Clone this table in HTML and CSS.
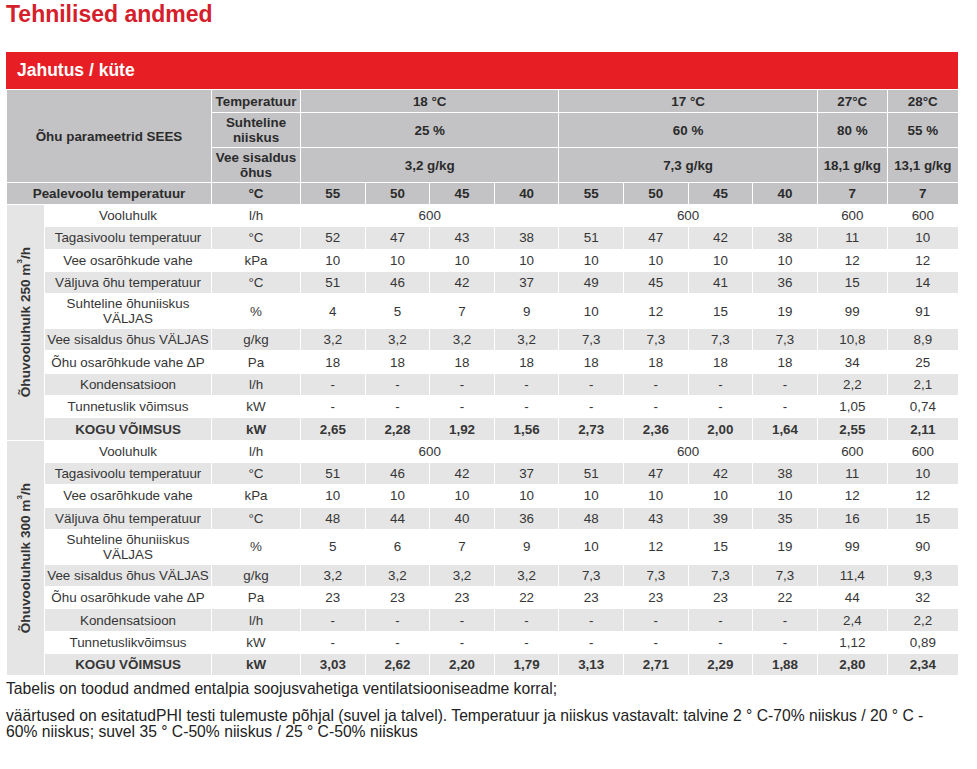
FILE: index.html
```html
<!DOCTYPE html>
<html lang="et">
<head>
<meta charset="utf-8">
<title>Tehnilised andmed</title>
<link rel="stylesheet" href="styles.css">
</head>
<body>
<div class="page">
  <h1 class="title">Tehnilised andmed</h1>
  <div class="bar">Jahutus / küte</div>
  <table class="data">
    <colgroup>
      <col class="c-grp"><col class="c-lbl"><col class="c-unit">
      <col class="c-v"><col class="c-v"><col class="c-v"><col class="c-v">
      <col class="c-v"><col class="c-v"><col class="c-v"><col class="c-v">
      <col class="c-a"><col class="c-b">
    </colgroup>
    <thead>
      <tr class="h-t">
        <th colspan="2" rowspan="3">Õhu parameetrid SEES</th>
        <th>Temperatuur</th>
        <th colspan="4">18 °C</th>
        <th colspan="4">17 °C</th>
        <th>27°C</th>
        <th>28°C</th>
      </tr>
      <tr class="h-2">
        <th>Suhteline niiskus</th>
        <th colspan="4">25 %</th>
        <th colspan="4">60 %</th>
        <th>80 %</th>
        <th>55 %</th>
      </tr>
      <tr class="h-2">
        <th>Vee sisaldus õhus</th>
        <th colspan="4">3,2 g/kg</th>
        <th colspan="4">7,3 g/kg</th>
        <th>18,1 g/kg</th>
        <th>13,1 g/kg</th>
      </tr>
      <tr class="h-p">
        <th colspan="2">Pealevoolu temperatuur</th>
        <th>°C</th>
        <th>55</th><th>50</th><th>45</th><th>40</th>
        <th>55</th><th>50</th><th>45</th><th>40</th>
        <th>7</th><th>7</th>
      </tr>
    </thead>
    <tbody>
      <tr class="r1 w">
        <td class="grp" rowspan="10"><div class="vt">Õhuvooluhulk 250 m<sup>3</sup>/h</div></td>
        <td>Vooluhulk</td><td>l/h</td>
        <td colspan="4">600</td><td colspan="4">600</td><td>600</td><td>600</td>
      </tr>
      <tr class="r1 g">
        <td>Tagasivoolu temperatuur</td><td>°C</td>
        <td>52</td><td>47</td><td>43</td><td>38</td><td>51</td><td>47</td><td>42</td><td>38</td><td>11</td><td>10</td>
      </tr>
      <tr class="r1 w">
        <td>Vee osarõhkude vahe</td><td>kPa</td>
        <td>10</td><td>10</td><td>10</td><td>10</td><td>10</td><td>10</td><td>10</td><td>10</td><td>12</td><td>12</td>
      </tr>
      <tr class="r1 g">
        <td>Väljuva õhu temperatuur</td><td>°C</td>
        <td>51</td><td>46</td><td>42</td><td>37</td><td>49</td><td>45</td><td>41</td><td>36</td><td>15</td><td>14</td>
      </tr>
      <tr class="r2 w">
        <td>Suhteline õhuniiskus VÄLJAS</td><td>%</td>
        <td>4</td><td>5</td><td>7</td><td>9</td><td>10</td><td>12</td><td>15</td><td>19</td><td>99</td><td>91</td>
      </tr>
      <tr class="r1 g">
        <td class="nw">Vee sisaldus õhus VÄLJAS</td><td>g/kg</td>
        <td>3,2</td><td>3,2</td><td>3,2</td><td>3,2</td><td>7,3</td><td>7,3</td><td>7,3</td><td>7,3</td><td>10,8</td><td>8,9</td>
      </tr>
      <tr class="r1 w">
        <td>Õhu osarõhkude vahe ΔP</td><td>Pa</td>
        <td>18</td><td>18</td><td>18</td><td>18</td><td>18</td><td>18</td><td>18</td><td>18</td><td>34</td><td>25</td>
      </tr>
      <tr class="r1 g">
        <td>Kondensatsioon</td><td>l/h</td>
        <td>-</td><td>-</td><td>-</td><td>-</td><td>-</td><td>-</td><td>-</td><td>-</td><td>2,2</td><td>2,1</td>
      </tr>
      <tr class="r1 w">
        <td>Tunnetuslik võimsus</td><td>kW</td>
        <td>-</td><td>-</td><td>-</td><td>-</td><td>-</td><td>-</td><td>-</td><td>-</td><td>1,05</td><td>0,74</td>
      </tr>
      <tr class="r1 g total">
        <td>KOGU VÕIMSUS</td><td>kW</td>
        <td>2,65</td><td>2,28</td><td>1,92</td><td>1,56</td><td>2,73</td><td>2,36</td><td>2,00</td><td>1,64</td><td>2,55</td><td>2,11</td>
      </tr>

      <tr class="r1 w">
        <td class="grp" rowspan="10"><div class="vt">Õhuvooluhulk 300 m<sup>3</sup>/h</div></td>
        <td>Vooluhulk</td><td>l/h</td>
        <td colspan="4">600</td><td colspan="4">600</td><td>600</td><td>600</td>
      </tr>
      <tr class="r1 g">
        <td>Tagasivoolu temperatuur</td><td>°C</td>
        <td>51</td><td>46</td><td>42</td><td>37</td><td>51</td><td>47</td><td>42</td><td>38</td><td>11</td><td>10</td>
      </tr>
      <tr class="r1 w">
        <td>Vee osarõhkude vahe</td><td>kPa</td>
        <td>10</td><td>10</td><td>10</td><td>10</td><td>10</td><td>10</td><td>10</td><td>10</td><td>12</td><td>12</td>
      </tr>
      <tr class="r1 g">
        <td>Väljuva õhu temperatuur</td><td>°C</td>
        <td>48</td><td>44</td><td>40</td><td>36</td><td>48</td><td>43</td><td>39</td><td>35</td><td>16</td><td>15</td>
      </tr>
      <tr class="r2 w">
        <td>Suhteline õhuniiskus VÄLJAS</td><td>%</td>
        <td>5</td><td>6</td><td>7</td><td>9</td><td>10</td><td>12</td><td>15</td><td>19</td><td>99</td><td>90</td>
      </tr>
      <tr class="r1 g">
        <td class="nw">Vee sisaldus õhus VÄLJAS</td><td>g/kg</td>
        <td>3,2</td><td>3,2</td><td>3,2</td><td>3,2</td><td>7,3</td><td>7,3</td><td>7,3</td><td>7,3</td><td>11,4</td><td>9,3</td>
      </tr>
      <tr class="r1 w">
        <td>Õhu osarõhkude vahe ΔP</td><td>Pa</td>
        <td>23</td><td>23</td><td>23</td><td>22</td><td>23</td><td>23</td><td>23</td><td>22</td><td>44</td><td>32</td>
      </tr>
      <tr class="r1 g">
        <td>Kondensatsioon</td><td>l/h</td>
        <td>-</td><td>-</td><td>-</td><td>-</td><td>-</td><td>-</td><td>-</td><td>-</td><td>2,4</td><td>2,2</td>
      </tr>
      <tr class="r1 w">
        <td>Tunnetuslikvõimsus</td><td>kW</td>
        <td>-</td><td>-</td><td>-</td><td>-</td><td>-</td><td>-</td><td>-</td><td>-</td><td>1,12</td><td>0,89</td>
      </tr>
      <tr class="r1 g total">
        <td>KOGU VÕIMSUS</td><td>kW</td>
        <td>3,03</td><td>2,62</td><td>2,20</td><td>1,79</td><td>3,13</td><td>2,71</td><td>2,29</td><td>1,88</td><td>2,80</td><td>2,34</td>
      </tr>
    </tbody>
  </table>
  <p class="note note-1">Tabelis on toodud andmed entalpia soojusvahetiga ventilatsiooniseadme korral;</p>
  <p class="note note-2">väärtused on esitatudPHI testi tulemuste põhjal (suvel ja talvel). Temperatuur ja niiskus vastavalt: talvine 2 ° C-70% niiskus / 20 ° C - 60% niiskus; suvel 35 ° C-50% niiskus / 25 ° C-50% niiskus</p>
</div>
</body>
</html>
```

FILE: styles.css
```css
html, body {
  margin: 0;
  padding: 0;
  background: #ffffff;
}

body {
  font-family: "Liberation Sans", Arial, Helvetica, sans-serif;
  color: #333333;
}

.page {
  padding: 0 19px 0 6px;
}

.title {
  margin: 0;
  padding-top: 1px;
  height: 51px;
  font-size: 23px;
  line-height: 26px;
  font-weight: bold;
  color: #d5202b;
}

.bar {
  width: 952px;
  height: 37px;
  box-sizing: border-box;
  padding-left: 11px;
  background: #e81e25;
  color: #ffffff;
  font-weight: bold;
  font-size: 17.5px;
  line-height: 37px;
}

.data {
  width: 952px;
  table-layout: fixed;
  border-collapse: collapse;
  font-size: 13.4px;
}

.c-grp { width: 38px; }
.c-lbl { width: 167px; }
.c-unit { width: 89px; }
.c-v { width: 64.6px; }
.c-a { width: 70px; }
.c-b { width: 71px; }

.data th,
.data td {
  border: 1px solid #ffffff;
  padding: 0 1px;
  text-align: center;
  vertical-align: middle;
  line-height: 15px;
}

.data thead th {
  background: #c3c3c5;
  color: #2b2b2b;
  font-weight: bold;
}

.h-t { height: 23px; }
.h-2 { height: 35px; }
.h-p { height: 22px; }

.r1 { height: 22.3px; }
.r2 { height: 35px; }

.data tbody td {
  color: #363636;
}

.g td { background: #e5e5e5; }
.w td { background: #ffffff; }

.data td.grp {
  background: #e5e5e5;
  padding: 0;
}

.vt {
  writing-mode: vertical-rl;
  transform: rotate(180deg);
  margin: 0 auto;
  font-weight: bold;
  font-size: 13.6px;
  color: #333333;
  white-space: nowrap;
}

.vt sup {
  font-size: 8px;
  line-height: 0;
}

.total td {
  font-weight: bold;
  color: #2b2b2b;
}

.nw {
  white-space: nowrap;
}

.note {
  margin: 0;
  font-size: 15.7px;
  line-height: 16px;
  color: #222222;
  width: 940px;
}

.note-1 {
  margin-top: 5px;
}

.note-2 {
  margin-top: 11px;
}
```
